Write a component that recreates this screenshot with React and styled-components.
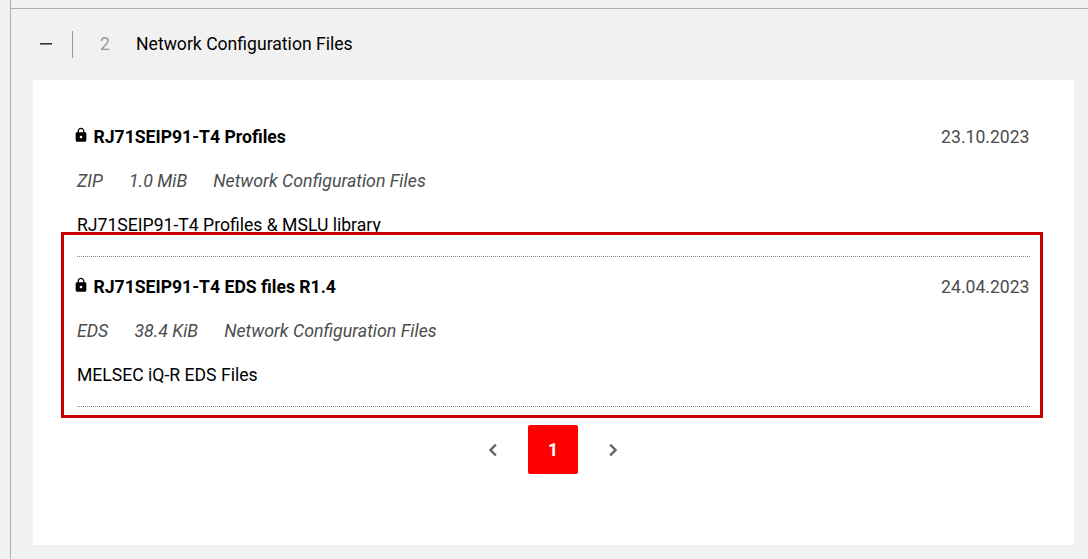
import React from "react";
import styled, { createGlobalStyle } from "styled-components";
import { MdLock, MdChevronLeft, MdChevronRight } from "react-icons/md";

const GlobalStyle = createGlobalStyle`
  * {
    box-sizing: border-box;
  }

  body {
    margin: 0;
    background: #f1f1f1;
    font-family: Roboto, "Liberation Sans", sans-serif;
    font-size: 17.6px;
    color: #000000;
    overflow: hidden;
  }
`;

const Page = styled.div`
  height: 559px;
  padding-left: 10px;
`;

const Column = styled.div`
  height: 100%;
  padding-top: 8px;
  border-left: 1px solid #b0b0b0;
`;

const Section = styled.section`
  border-top: 1px solid #b0b0b0;
  padding: 0 14px 0 22px;
`;

const SectionHeader = styled.header`
  display: flex;
  align-items: center;
  height: 71px;
  padding-left: 7px;
`;

const Minus = styled.span`
  width: 12px;
  height: 2px;
  margin-top: -2px;
  background: #333333;
  border-bottom: 1px solid #808080;
`;

const Divider = styled.span`
  width: 1px;
  height: 27px;
  margin: 0 27px 0 20px;
  background: #999999;
`;

const Count = styled.span`
  width: 36px;
  padding-bottom: 2px;
  color: #999999;
`;

const SectionTitle = styled.h2`
  margin: 0;
  padding-bottom: 2px;
  font-size: inherit;
  font-weight: 400;
`;

const Panel = styled.div`
  height: 465px;
  padding: 27px 44px 0;
  background: #ffffff;
`;

const List = styled.div`
  position: relative;
`;

const Item = styled.article`
  height: 150px;
  padding-top: 8px;
  border-bottom: 1px dotted #888888;
`;

const Row = styled.div`
  display: flex;
  align-items: center;
  height: 44px;
  white-space: nowrap;
`;

const Lock = styled(MdLock)`
  width: 16px;
  height: 16px;
  margin: -4px 4.5px 0 -4px;
`;

const FileName = styled.span`
  flex: 1;
  font-weight: 700;
`;

const FileDate = styled.span`
  padding-right: 0.5px;
  color: #4d4d4d;
`;

const Meta = styled(Row)`
  gap: 26px;
  padding-bottom: 2px;
  font-size: 17.8px;
  font-style: italic;
  color: #4d4d4d;
`;

// sits over the list, its top edge cuts the first description
const Highlight = styled.div`
  position: absolute;
  top: 125px;
  left: -16px;
  right: -13px;
  height: 186px;
  border: 3px solid #c80000;
  pointer-events: none;
`;

const Pagination = styled.nav`
  display: flex;
  align-items: center;
  justify-content: center;
  gap: 23px;
  padding: 18px 1px 0 0;
`;

const PageArrow = styled.button`
  display: flex;
  padding: 0;
  border: 0;
  background: none;
  color: #666666;
  font-size: 24px;

  path:not([fill="none"]) {
    stroke-width: 0.5;
    stroke: currentColor;
  }

  path[fill="none"] {
    stroke: none;
  }
`;

const PageNumber = styled.button`
  width: 50px;
  height: 49px;
  padding: 0;
  border: 0;
  border-radius: 2px;
  background: #ff0000;
  color: #ffffff;
  font: inherit;
  font-weight: 700;
`;

const files = [
  {
    name: "RJ71SEIP91-T4 Profiles",
    date: "23.10.2023",
    type: "ZIP",
    size: "1.0 MiB",
    description: "RJ71SEIP91-T4 Profiles & MSLU library",
  },
  {
    name: "RJ71SEIP91-T4 EDS files R1.4",
    date: "24.04.2023",
    type: "EDS",
    size: "38.4 KiB",
    description: "MELSEC iQ-R EDS Files",
  },
];

function FileItem({ file }) {
  return (
    <Item>
      <Row>
        <Lock />
        <FileName>{file.name}</FileName>
        <FileDate>{file.date}</FileDate>
      </Row>
      <Meta>
        <span>{file.type}</span>
        <span>{file.size}</span>
        <span>Network Configuration Files</span>
      </Meta>
      <Row>{file.description}</Row>
    </Item>
  );
}

function App() {
  return (
    <Page>
      <GlobalStyle />
      <Column>
        <Section>
          <SectionHeader>
            <Minus />
            <Divider />
            <Count>{files.length}</Count>
            <SectionTitle>Network Configuration Files</SectionTitle>
          </SectionHeader>
          <Panel>
            <List>
              {files.map((file) => (
                <FileItem key={file.name} file={file} />
              ))}
              <Highlight />
            </List>
            <Pagination>
              <PageArrow>
                <MdChevronLeft />
              </PageArrow>
              <PageNumber>1</PageNumber>
              <PageArrow>
                <MdChevronRight />
              </PageArrow>
            </Pagination>
          </Panel>
        </Section>
      </Column>
    </Page>
  );
}

export default App;
